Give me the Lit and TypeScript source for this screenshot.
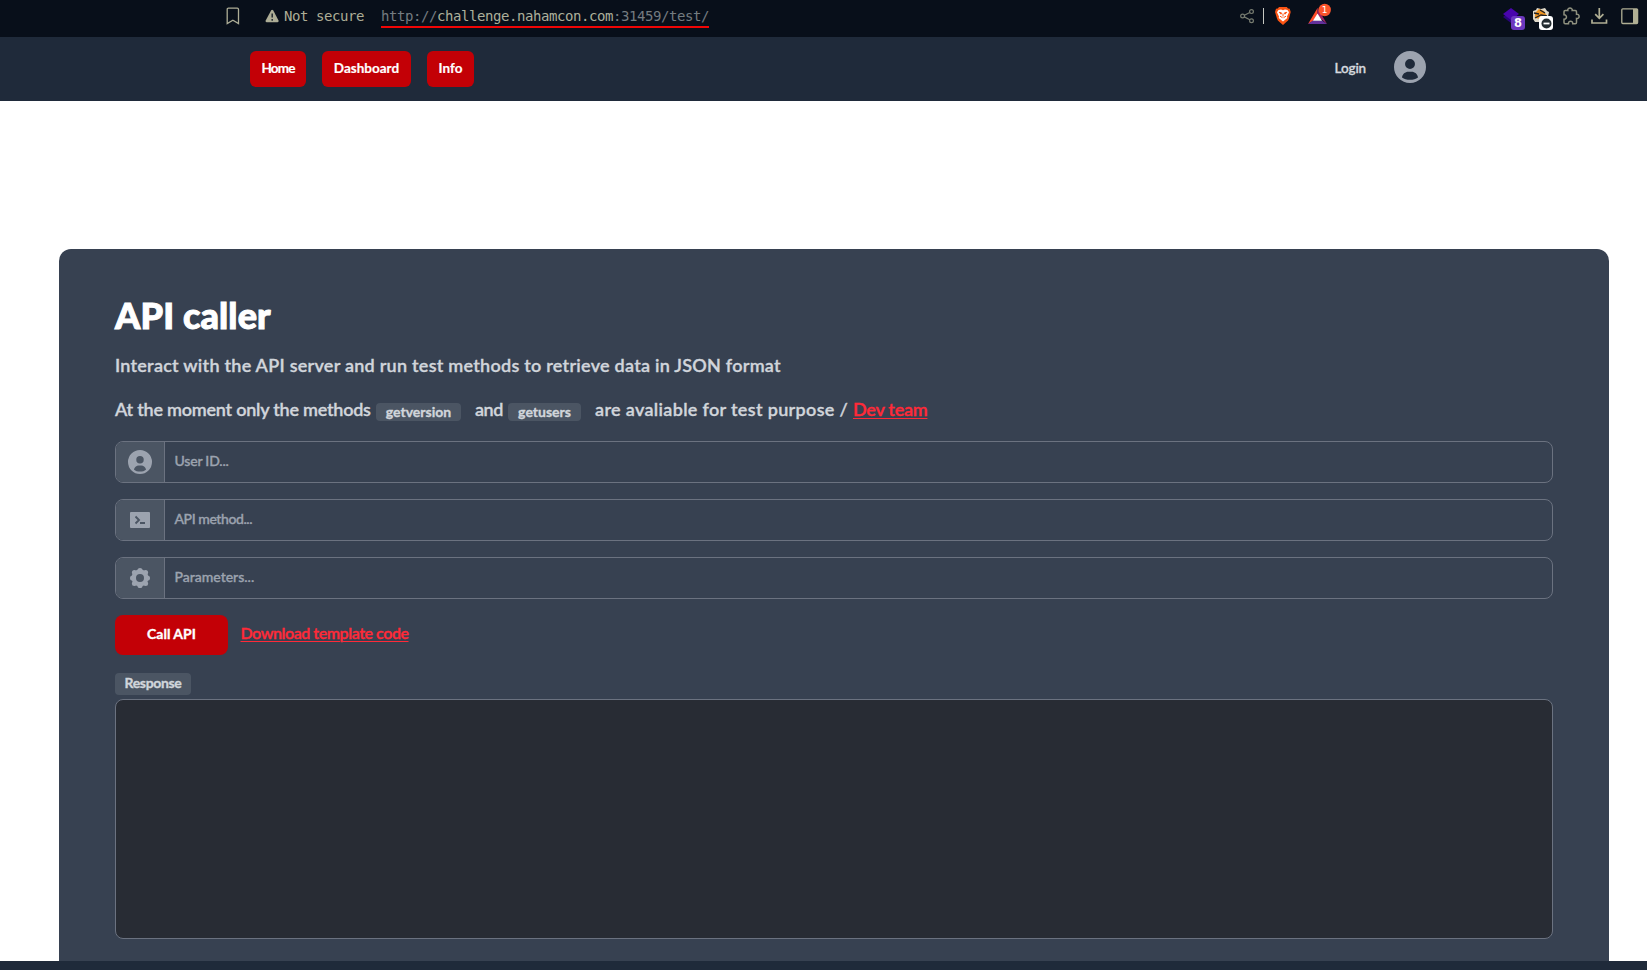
import { LitElement, html, css, svg } from "lit";
import { customElement } from "lit/decorators.js";

const userPath = svg`<path fill="currentColor" d="M10 0a10 10 0 1 0 10 10A10.011 10.011 0 0 0 10 0Zm0 5a3.1 3.1 0 1 1 0 6.2 3.1 3.1 0 0 1 0-6.2Zm0 13c-2 0-3.700-.4-5-1.500C5.200 14.500 7 13 9 13h2c2 0 3.800 1.500 4 3.500-1.300 1.100-3 1.500-5 1.500Z"/>`;

@customElement("browser-bar")
class BrowserBar extends LitElement {
  static styles = css`
    :host { display: flex; align-items: flex-start; box-sizing: border-box; height: 37px; padding-left: 226px; background: #080f1a; color: #adad96; font-family: "DejaVu Sans Mono", monospace; }
    svg { display: block; flex: none; }
    .bookmark { margin-top: 7px; }
    .warn { margin: 9px 0 0 25px; }
    .label { flex: none; font-size: 14px; letter-spacing: -0.43px; line-height: 20px; margin: 6px 0 0 4px; width: 97px; white-space: pre; }
    .url { flex: none; font-size: 14px; letter-spacing: -0.43px; line-height: 20px; height: 20px; margin-top: 6px; width: 328px; border-bottom: 2px solid #f00505; color: #747b80; white-space: pre; }
    .host { color: #adb09a; }
    .share { margin: 9px 0 0 531px; }
    .sep { flex: none; width: 1px; height: 16px; margin: 8px 10px 0 8px; background: #c5c7c1; }
    .bat { margin: 3px 0 0 16px; }
    .gem { margin: 7px 0 0 169px; }
    .cat { margin: 7px 0 0 5px; }
    .puzzle { margin: 7px 0 0 8px; }
    .down { margin: 8px 0 0 11px; }
    .panel { margin: 8px 0 0 13px; }
  `;
  render() {
    return html`
      <svg class="bookmark" width="14" height="18" viewBox="0 0 14 18" fill="none" stroke="#adad96" stroke-width="1.300"><path d="M1.200 2.400Q1.200 1.200 2.400 1.200H11.300Q12.500 1.200 12.500 2.400V16.500L6.900 13.200 1.200 16.500Z"/></svg>
      <svg class="warn" width="15" height="14" viewBox="0 0 15 14"><path d="M6.200 1.300Q7.200 0 8.200 1.300L13.500 11.500Q14 13.200 12.600 13.200H1.600Q.1 13.200.7 11.500Z" fill="#adad96"/><path d="M7.200 4.500v4M7.200 10v1.700" stroke="#222a30" stroke-width="1.500"/></svg>
      <span class="label">Not secure</span>
      <span class="url">http://<span class="host">challenge.nahamcon.com</span>:31459/test/</span>
      <svg class="share" width="15" height="15" viewBox="0 0 15 15" fill="none" stroke="#777c70" stroke-width="1.200"><circle cx="2.600" cy="7" r="1.900"/><circle cx="11.500" cy="2.600" r="1.900"/><circle cx="11.500" cy="11.700" r="1.900"/><path d="M4.300 6.200 9.800 3.500M4.300 7.900l5.500 2.900"/></svg>
      <span class="sep"></span>
      <svg class="brave" width="18" height="26" viewBox="0 0 18 26"><path d="M5 7H12.800L14 8.500 15.700 8.700 16.700 12 15 18.500Q14.500 20.500 12.300 22L9 25 5.500 22Q3.500 20.500 3 18.500L1 12 2 8.700 3.800 8.500Z" fill="#fb5413"/><path d="M4.500 10 7 9.500 9 10.200 11 9.500 13.500 10 15 12.200 13 16.500 13.300 18 9 21.500 4.700 18 5 16.500 3 12.200Z" fill="#fff"/><path d="M5.200 12.300l2.300.6-.5 1.300ZM12.800 12.300l-2.300.6.5 1.300ZM6 16.200l2.500 1.500M12 16.200l-2.500 1.500M9 13.500v3" fill="#fb5413" stroke="#fb5413" stroke-width="1"/></svg>
      <svg class="bat" width="26" height="22" viewBox="0 0 26 22"><path d="M9.500 5 0 21 9.500 15Z" fill="#ff4c2a"/><path d="M9.500 5 19 21 9.500 13Z" fill="#a02564"/><path d="M0 21H19L14 17.500H5Z" fill="#62309a"/><path d="M9.500 10.500 5 17.800H14Z" fill="#fff"/><circle cx="16.700" cy="7" r="6.200" fill="#fb542b"/><text x="16.700" y="10.200" text-anchor="middle" font-family="DejaVu Sans" font-size="9" fill="#fff">1</text></svg>
      <svg class="gem" width="24" height="24" viewBox="0 0 24 24"><path d="M8 4 16 10 8 16 0 10Z" fill="#28047c"/><path d="M8 1 16 7 8 13 0 7Z" fill="#4905ad"/><rect x="8" y="9" width="14" height="14" rx="3" fill="#6c38bf"/><text x="15" y="20.200" text-anchor="middle" font-family="DejaVu Sans" font-weight="700" font-size="11.500" fill="#fff">8</text></svg>
      <svg class="cat" width="22" height="24" viewBox="0 0 22 24"><path d="M1 4 4 3 5 1 9 2 13 1 15 4 17 5 16 10 8 15 3 15 1 12Z" fill="#ded8c9"/><path d="M3 6 7 2 12 4 15 9 9 12 3 11Z" fill="#ef9420"/><path d="M2 6 7 7M3 11l6-3 6 1M8 3l5 3" stroke="#1d2026" stroke-width="1.300" fill="none"/><rect x="7" y="9" width="14" height="14" rx="3" fill="#fff"/><circle cx="14.500" cy="16.500" r="5" fill="#222b30"/><path d="M11.500 16.500h6" stroke="#fff" stroke-width="1.800"/></svg>
      <svg class="puzzle" width="18" height="19" viewBox="0 0 18 19" fill="none" stroke="#8f917f" stroke-width="1.500"><path d="M3.200 3.500H5.800C5 .3 11 .3 10.200 3.500H13.300Q14.500 3.500 14.500 4.700V7.300C18 6.600 18 12.200 14.500 11.500V15.500Q14.500 16.700 13.300 16.700H10.700C11 13.400 6.200 13.400 6.500 16.700H3.200Q2 16.700 2 15.500V12.200C5.300 12.500 5.300 7.500 2 7.800V4.700Q2 3.500 3.200 3.500Z"/></svg>
      <svg class="down" width="17" height="17" viewBox="0 0 17 17" fill="none" stroke="#b0af94" stroke-width="1.700"><path d="M8.300 0V10M4.200 6.200 8.300 10.300 12.400 6.200M1 11.500V15H15.500V11.500"/></svg>
      <svg class="panel" width="18" height="17" viewBox="0 0 18 17"><rect x=".8" y=".8" width="15.800" height="14.700" rx="1" fill="none" stroke="#b0af94" stroke-width="1.300"/><path d="M12 1H16.500V15.500H12Z" fill="#b0af94"/></svg>
    `;
  }
}

@customElement("site-nav")
class SiteNav extends LitElement {
  static styles = css`
    :host { display: flex; align-items: flex-start; gap: 16px; box-sizing: border-box; height: 64px; padding: 14px 221px 0 250px; background: #1f2a3a; font: 700 13.500px/35px Lato, sans-serif; }
    .btn { box-sizing: border-box; height: 36px; border-radius: 6px; background: #c30006; color: #fff; text-align: center; text-decoration: none; white-space: nowrap; -webkit-text-stroke: 0.2px; }
    .home { width: 56px; letter-spacing: -0.85px; }
    .dash { width: 89px; }
    .info { width: 47px; }
    .login { margin-left: auto; color: #d5d9df; font-weight: 600; letter-spacing: -0.15px; -webkit-text-stroke: 0.3px; }
    .avatar { display: block; margin-left: 12px; color: #9ca3af; }
  `;
  render() {
    return html`
      <a class="btn home">Home</a><a class="btn dash">Dashboard</a><a class="btn info">Info</a>
      <span class="login">Login</span>
      <svg class="avatar" width="32" height="32" viewBox="0 0 20 20">${userPath}</svg>
    `;
  }
}

@customElement("api-caller")
class ApiCaller extends LitElement {
  static styles = css`
    :host { display: block; box-sizing: border-box; height: 712px; margin: 148px 38px 0 59px; padding: 46px 56px 0; border-radius: 12px 12px 0 0; background: #374151; color: #d1d5db; font-family: Lato, sans-serif; -webkit-text-stroke: 0.35px; }
    h1 { margin: 0 0 16px; font: 900 36px/40px Lato, sans-serif; letter-spacing: 0.15px; color: #fff; -webkit-text-stroke: 1px; }
    p { margin: 0; font-size: 18px; line-height: 28px; font-weight: 600; white-space: nowrap; }
    .intro { letter-spacing: 0.255px; margin-bottom: 16px; }
    .methods { display: flex; margin-bottom: 18px; }
    .lead { width: 255px; letter-spacing: -0.23px; }
    .and { width: 27px; letter-spacing: -0.5px; }
    .rest { width: 253px; letter-spacing: 0.33px; }
    .tag { box-sizing: border-box; border-radius: 4px; background: #4b5563; font-weight: 700; font-size: 14px; text-align: center; }
    .tag.inline { height: 18px; line-height: 17px; margin: 8px 14px 0 6px; }
    .ver { width: 85px; }
    .usr { width: 73px; }
    .link { color: #ff2a38; text-decoration: underline; text-decoration-thickness: 1px; text-underline-offset: 2px; }
    .team { margin-left: 5px; letter-spacing: -0.25px; }
    .field { display: flex; box-sizing: border-box; height: 42px; margin-bottom: 16px; border: 1px solid #6b7280; border-radius: 8px; overflow: hidden; }
    .addon { display: grid; place-items: center; width: 48px; background: #4b5563; border-right: 1px solid #6b7280; color: #9ca3af; }
    .addon svg { display: block; }
    .ph { padding-left: 9.500px; line-height: 38px; font-size: 14px; font-weight: 500; color: #9ca3af; }
    .p0 { letter-spacing: -0.2px; }
    .p1 { letter-spacing: -0.43px; }
    .actions { display: flex; margin-bottom: 18px; }
    .call { width: 113px; height: 40px; border-radius: 8px; background: #c30006; color: #fff; font-weight: 700; font-size: 14px; line-height: 38px; text-align: center; }
    .download { margin-left: 12.500px; font-size: 16px; font-weight: 600; line-height: 36px; letter-spacing: -0.44px; }
    .resp { width: 76px; height: 22px; line-height: 20px; letter-spacing: -0.35px; margin-bottom: 4px; }
    .output { box-sizing: border-box; height: 240px; border: 1px solid #6b7280; border-radius: 8px; background: #282c34; }
  `;
  private fields = [
    ["User ID...", html`<svg width="24" height="24" viewBox="0 0 20 20">${userPath}</svg>`],
    ["API method...", html`<svg width="20" height="16" viewBox="0 0 20 16"><rect width="20" height="16" rx="1" fill="currentColor"/><path d="M5.500 4.500 9 8 5.500 11.500M10 11h5" fill="none" stroke="#4b5563" stroke-width="1.900"/></svg>`],
    ["Parameters...", html`<svg width="20" height="20" viewBox="0 0 20 20" fill="currentColor"><circle cx="10" cy="10" r="6.200" fill="none" stroke="currentColor" stroke-width="4.400"/><circle cx="10" cy="2.600" r="2.600"/><circle cx="10" cy="17.400" r="2.600"/><circle cx="2.600" cy="10" r="2.600"/><circle cx="17.400" cy="10" r="2.600"/><circle cx="4.400" cy="4.400" r="2.500"/><circle cx="15.600" cy="4.400" r="2.500"/><circle cx="4.400" cy="15.600" r="2.500"/><circle cx="15.600" cy="15.600" r="2.500"/></svg>`],
  ];
  render() {
    return html`
      <h1>API caller</h1>
      <p class="intro">Interact with the API server and run test methods to retrieve data in JSON format</p>
      <p class="methods">
        <span class="lead">At the moment only the methods</span><span class="tag inline ver">getversion</span>
        <span class="and">and</span><span class="tag inline usr">getusers</span>
        <span class="rest">are avaliable for test purpose /</span><a class="link team">Dev team</a>
      </p>
      ${this.fields.map(([label, icon], i) => html`<div class="field"><span class="addon">${icon}</span><span class="ph p${i}">${label}</span></div>`)}
      <div class="actions"><span class="call">Call API</span><a class="link download">Download template code</a></div>
      <div class="tag resp">Response</div>
      <div class="output"></div>
    `;
  }
}

@customElement("app-root")
class AppRoot extends LitElement {
  static styles = css`
    :host { display: block; height: 970px; overflow: hidden; background: #fff; }
    .footer { height: 9px; background: #1f2a3a; }
  `;
  render() {
    return html`<browser-bar></browser-bar><site-nav></site-nav><api-caller></api-caller><div class="footer"></div>`;
  }
}
